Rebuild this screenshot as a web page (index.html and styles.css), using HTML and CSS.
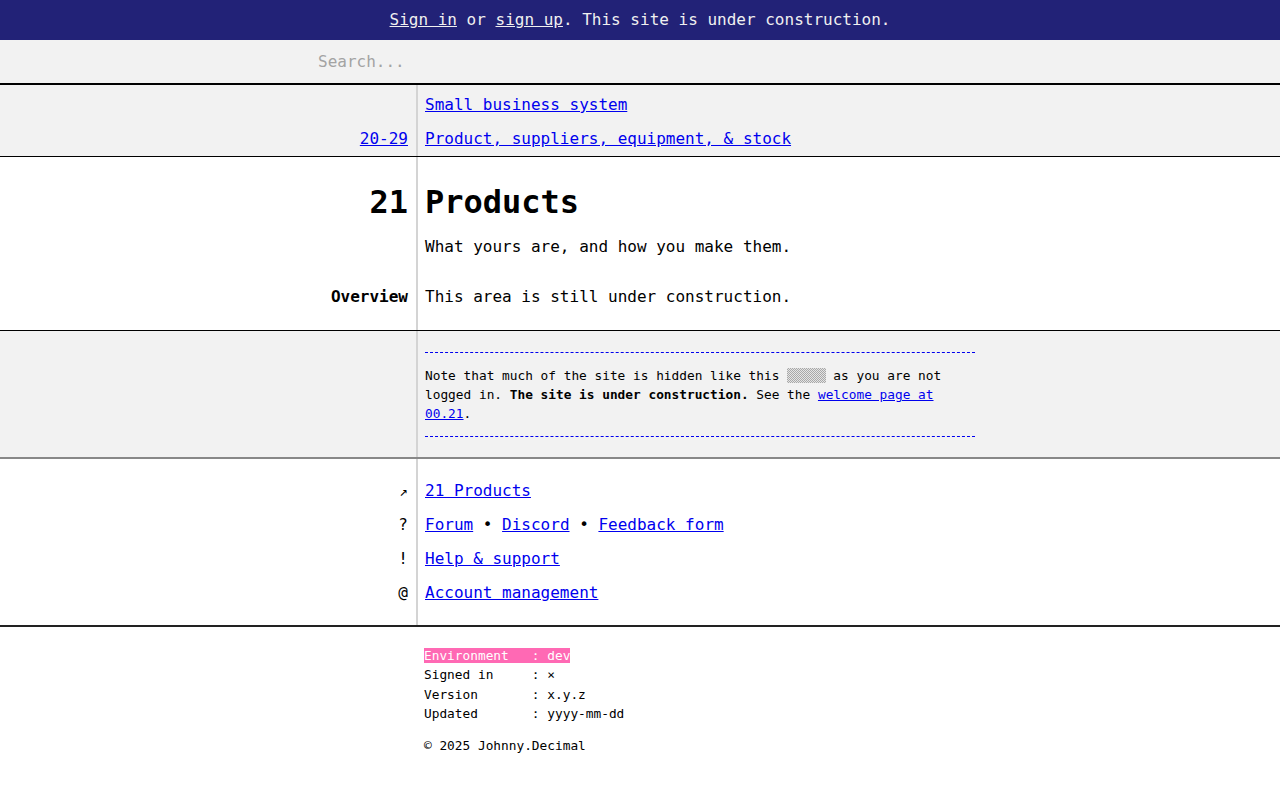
FILE: index.html
```html
<!DOCTYPE html>
<html lang="en">
<head>
<meta charset="utf-8">
<title>21 Products</title>
<link rel="stylesheet" href="styles.css">
</head>
<body>
<div class="topbar"><a href="#">Sign in</a> or <a href="#">sign up</a>. This site is under construction.</div>
<div class="search"><input type="text" placeholder="Search..."></div>

<section class="sec gray crumbs">
  <div class="row"><div class="lbl"></div><div class="val"><a href="#">Small business system</a></div></div>
  <div class="row"><div class="lbl"><a href="#">20-29</a></div><div class="val"><a href="#">Product, suppliers, equipment, &amp; stock</a></div></div>
</section>

<section class="sec main">
  <div class="row head"><div class="lbl">21</div><div class="val"><h1>Products</h1></div></div>
  <div class="row desc"><div class="lbl"></div><div class="val">What yours are, and how you make them.</div></div>
  <div class="row over"><div class="lbl strong">Overview</div><div class="val">This area is still under construction.</div></div>
</section>

<section class="sec gray notes">
  <div class="row"><div class="lbl"></div><div class="val">
    <div class="note">Note that much of the site is hidden like this <span class="hid">░░░░░</span> as you are not logged in. <b>The site is under construction.</b> See the <a href="#">welcome page at 00.21</a>.</div>
  </div></div>
</section>

<section class="sec links">
  <div class="row"><div class="lbl sym">↗</div><div class="val"><a href="#">21 Products</a></div></div>
  <div class="row"><div class="lbl">?</div><div class="val"><a href="#">Forum</a> • <a href="#">Discord</a> • <a href="#">Feedback form</a></div></div>
  <div class="row"><div class="lbl">!</div><div class="val"><a href="#">Help &amp; support</a></div></div>
  <div class="row"><div class="lbl">@</div><div class="val"><a href="#">Account management</a></div></div>
</section>

<footer class="foot">
  <div class="meta"><span class="env">Environment   : dev</span>
Signed in     : ×
Version       : x.y.z
Updated       : yyyy-mm-dd</div>
  <div class="copy">© 2025 Johnny.Decimal</div>
</footer>
</body>
</html>
```

FILE: styles.css
```css
* { box-sizing: border-box; }

body {
  margin: 0;
  font-family: "DejaVu Sans Mono", "Liberation Mono", monospace;
  font-size: 16px;
  color: #000;
  background: #fff;
}

a { color: #0000ee; }

.topbar {
  background: #222277;
  color: #f0f0f0;
  height: 40px;
  line-height: 40px;
  text-align: center;
}
.topbar a { color: #f0f0f0; }

.search {
  background: #f2f2f2;
  height: 45px;
  border-bottom: 2px solid #000;
  display: flex;
}
.search input {
  width: 644px;
  margin: 0 auto;
  border: 0;
  padding: 0;
  background: transparent;
  font: inherit;
  color: #000;
  outline: none;
}
.search input::placeholder { color: #a3a3a3; }

.sec {
  background: linear-gradient(#d4d4d4, #d4d4d4) 416px 0 / 2px 100% no-repeat;
  display: flex;
  flex-direction: column;
}
.sec.gray { background-color: #f2f2f2; }

.row {
  display: grid;
  grid-template-columns: 416px 1fr;
  line-height: 24px;
}
.lbl { text-align: right; padding-right: 8px; }
.val { padding-left: 9px; }
.strong { font-weight: bold; }

.crumbs {
  padding: 8px 0 5px;
  gap: 10px;
  border-bottom: 1px solid #000;
}

.main {
  padding: 25px 0 21px;
  border-bottom: 1px solid #000;
}
.head { font-size: 32px; line-height: 40px; font-weight: bold; }
.head h1 { margin: 0; font-size: 32px; line-height: 40px; }
.desc { margin-top: 13px; }
.over { margin-top: 26px; }

.notes {
  padding: 21px 0 20px;
  border-bottom: 2px solid #888;
}
.note {
  width: 550px;
  border-top: 1px dashed #0000ee;
  border-bottom: 1px dashed #0000ee;
  padding: 12.8px 0;
  font-size: 12.8px;
  line-height: 19.2px;
}
.hid {
  color: transparent;
  background: repeating-conic-gradient(#a8a8a8 0 25%, #e4e4e4 0 50%) 0 0 / 2px 2px;
}

.links {
  padding: 20px 0 20px;
  gap: 10px;
  border-bottom: 2px solid #222;
}
.sym { font-size: 14px; }

.foot {
  padding: 19px 0 40px 424px;
  font-size: 12.8px;
  line-height: 19.2px;
}
.meta { white-space: pre; }
.env { background: #ff69b4; color: #fff; }
.copy { margin-top: 13px; }
```
